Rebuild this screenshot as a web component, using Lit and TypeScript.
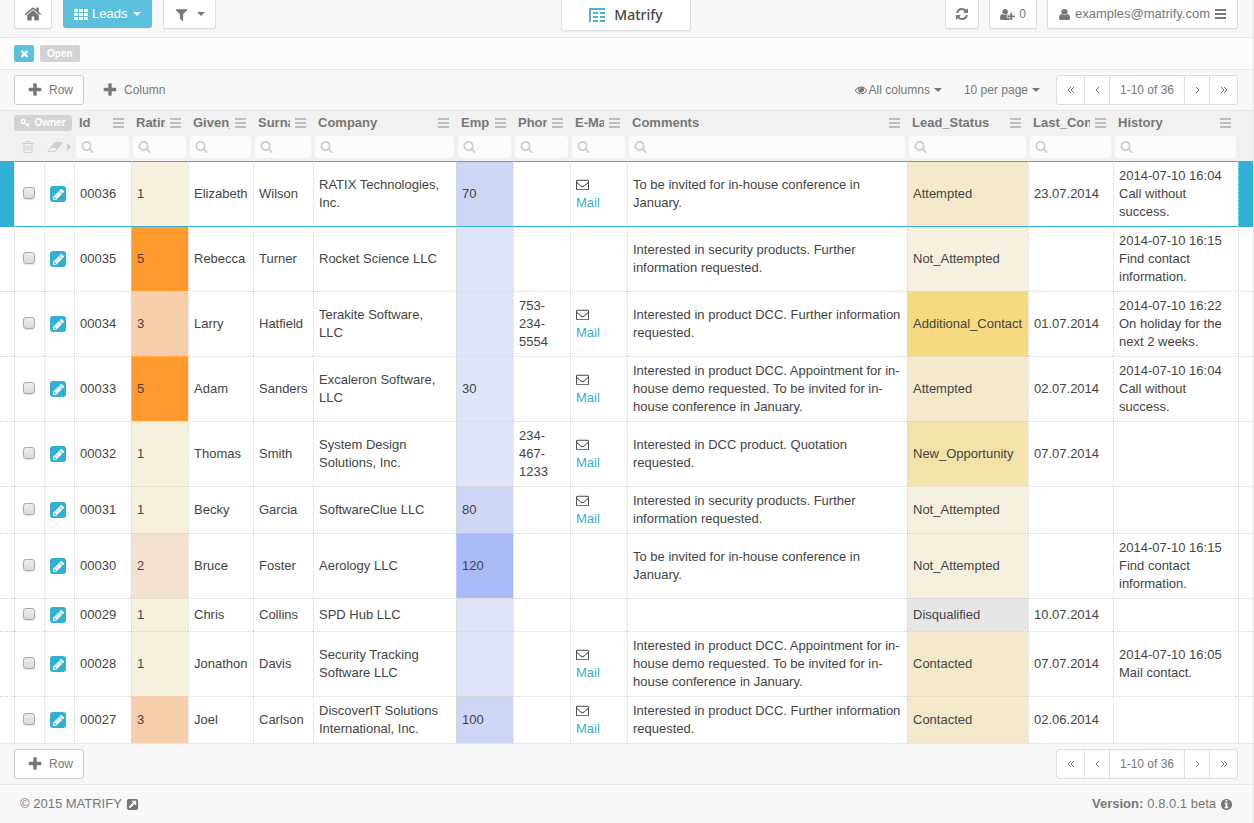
import { LitElement, html, css, svg, nothing } from "lit";
import { customElement } from "lit/decorators.js";
import { classMap } from "lit/directives/class-map.js";

interface Icon {
  box: string;
  w: number;
  h: number;
  d: string;
}

const em = "0 0 1792 1792";

const icons: Record<string, Icon> = {
  home: { box: em, w: 18, h: 18, d: "M1472 992v480q0 26-19 45t-45 19h-384v-384h-256v384h-384q-26 0-45-19t-19-45v-480q0-1 .5-3t.5-3l575-474 575 474q1 2 1 6zm223-69l-62 74q-8 9-21 11h-3q-13 0-21-7l-692-577-692 577q-12 8-24 7-13-2-21-11l-62-74q-8-10-7-23.5t11-21.5l719-599q32-26 76-26t76 26l244 204v-195q0-14 9-23t23-9h192q14 0 23 9t9 23v408l219 182q10 8 11 21.5t-7 23.5z" },
  grid: { box: "0 0 14 11", w: 14, h: 11, d: "M0 0h4v3h-4zM5 0h4v3h-4zM10 0h4v3h-4zM0 4h4v3h-4zM5 4h4v3h-4zM10 4h4v3h-4zM0 8h4v3h-4zM5 8h4v3h-4zM10 8h4v3h-4z" },
  filter: { box: em, w: 15, h: 15, d: "M1595 295q17 41-14 70l-493 493v742q0 42-39 59-13 5-25 5-27 0-45-19l-256-256q-19-19-19-45v-486l-493-493q-31-29-14-70 17-39 59-39h1280q42 0 59 39z" },
  refresh: { box: em, w: 14, h: 14, d: "M1639 1056q0 5-1 7-64 268-268 434.5t-478 166.5q-146 0-282.5-55t-243.5-157l-129 129q-19 19-45 19t-45-19-19-45v-448q0-26 19-45t45-19h448q26 0 45 19t19 45-19 45l-137 137q71 66 161 102t187 36q134 0 250-65t186-179q11-17 53-117 8-23 30-23h192q13 0 22.5 9.5t9.5 22.5zm25-800v448q0 26-19 45t-45 19h-448q-26 0-45-19t-19-45 19-45l138-138q-148-137-349-137-134 0-250 65t-186 179q-11 17-53 117-8 23-30 23h-199q-13 0-22.5-9.5t-9.5-22.5v-7q65-268 270-434.5t480-166.5q146 0 284 55.5t245 156.5l130-129q19-19 45-19t45 19 19 45z" },
  userPlus: { box: "0 0 2048 1792", w: 15, h: 13, d: "M704 896q-159 0-271.5-112.5t-112.5-271.5 112.5-271.5 271.5-112.5 271.5 112.5 112.5 271.5-112.5 271.5-271.5 112.5zm960 128h352q13 0 22.5 9.5t9.5 22.5v192q0 13-9.5 22.5t-22.5 9.5h-352v352q0 13-9.5 22.5t-22.5 9.5h-192q-13 0-22.5-9.5t-9.5-22.5v-352h-352q-13 0-22.5-9.5t-9.5-22.5v-192q0-13 9.5-22.5t22.5-9.5h352v-352q0-13 9.5-22.5t22.5-9.5h192q13 0 22.5 9.5t9.5 22.5v352zm-736 224q0 52 38 90t90 38h256v238q-68 50-171 50h-874q-121 0-194-69t-73-190q0-53 3.5-103.5t14-109 26.5-108.5 43-97.5 62-81 85.5-53.5 111.5-20q19 0 39 17 79 61 154.5 91.5t164.5 30.5 164.5-30.5 154.5-91.5q20-17 39-17 132 0 217 96h-223q-52 0-90 38t-38 90v192z" },
  user: { box: "256 128 1280 1536", w: 11, h: 11, d: "M1536 1399q0 109-62.5 187t-150.5 78h-854q-88 0-150.5-78t-62.5-187q0-85 8.5-160.5t31.5-152 58.5-131 94-89 134.5-34.5q131 128 313 128t313-128q76 0 134.5 34.5t94 89 58.5 131 31.5 152 8.5 160.5zm-256-887q0 159-112.5 271.5t-271.5 112.5-271.5-112.5-112.5-271.5 112.5-271.5 271.5-112.5 271.5 112.5 112.5 271.5z" },
  bars: { box: "0 0 11 10", w: 11, h: 10, d: "M0 0h11v2h-11zM0 4h11v2h-11zM0 8h11v2h-11z" },
  times: { box: em, w: 11, h: 11, d: "M1490 1322q0 40-28 68l-136 136q-28 28-68 28t-68-28l-294-294-294 294q-28 28-68 28t-68-28l-136-136q-28-28-28-68t28-68l294-294-294-294q-28-28-28-68t28-68l136-136q28-28 68-28t68 28l294 294 294-294q28-28 68-28t68 28l136 136q28 28 28 68t-28 68l-294 294 294 294q28 28 28 68z" },
  plus: { box: em, w: 16, h: 16, d: "M1600 736v192q0 40-28 68t-68 28h-416v416q0 40-28 68t-68 28h-192q-40 0-68-28t-28-68v-416h-416q-40 0-68-28t-28-68v-192q0-40 28-68t68-28h416v-416q0-40 28-68t68-28h192q40 0 68 28t28 68v416h416q40 0 68 28t28 68z" },
  eye: { box: em, w: 12, h: 12, d: "M1664 960q-152-236-381-353 61 104 61 225 0 185-131.5 316.5t-316.5 131.5-316.5-131.5-131.5-316.5q0-121 61-225-229 117-381 353 133 205 333.5 326.5t434.5 121.5 434.5-121.5 333.5-326.5zm-720-384q0-20-14-34t-34-14q-125 0-214.5 89.5t-89.5 214.5q0 20 14 34t34 14 34-14 14-34q0-86 61-147t147-61q20 0 34-14t14-34zm848 384q0 34-20 69-140 230-376.5 368.5t-499.5 138.5-499.5-139-376.5-368q-20-35-20-69t20-69q140-229 376.5-368t499.5-139 499.5 139 376.5 368q20 35 20 69z" },
  search: { box: em, w: 13, h: 13, d: "M1216 832q0-185-131.5-316.5t-316.5-131.5-316.5 131.5-131.5 316.5 131.5 316.5 316.5 131.5 316.5-131.5 131.5-316.5zm512 832q0 52-38 90t-90 38q-54 0-90-38l-343-342q-179 124-399 124-143 0-273.5-55.5t-225-150-150-225-55.5-273.5 55.5-273.5 150-225 225-150 273.5-55.5 273.5 55.5 225 150 150 225 55.5 273.5q0 220-124 399l343 343q37 37 37 90z" },
  trash: { box: em, w: 14, h: 14, d: "M704 736v576q0 14-9 23t-23 9h-64q-14 0-23-9t-9-23v-576q0-14 9-23t23-9h64q14 0 23 9t9 23zm256 0v576q0 14-9 23t-23 9h-64q-14 0-23-9t-9-23v-576q0-14 9-23t23-9h64q14 0 23 9t9 23zm256 0v576q0 14-9 23t-23 9h-64q-14 0-23-9t-9-23v-576q0-14 9-23t23-9h64q14 0 23 9t9 23zm128 724v-948h-896v948q0 22 7 40.5t14.5 27 10.5 8.5h832q3 0 10.5-8.5t14.5-27 7-40.5zm-672-1076h448l-48-117q-7-9-17-11h-317q-10 2-17 11zm928 32v64q0 14-9 23t-23 9h-96v948q0 83-47 143.5t-113 60.5h-832q-66 0-113-58.5t-47-141.5v-952h-96q-14 0-23-9t-9-23v-64q0-14 9-23t23-9h309l70-167q15-37 54-63t79-26h320q40 0 79 26t54 63l70 167h309q14 0 23 9t9 23z" },
  eraser: { box: "0 0 2048 1792", w: 16, h: 14, d: "M960 1408l336-384h-768l-336 384h768zm1013-1077q15 34 9.5 71.5t-30.5 65.5l-896 1024q-38 44-96 44h-768q-38 0-69.5-20.5t-47.5-54.5q-15-34-9.5-71.5t30.5-65.5l896-1024q38-44 96-44h768q38 0 69.5 20.5t47.5 54.5z" },
  envelope: { box: em, w: 13, h: 13, d: "M1664 1504v-768q-32 36-69 66-268 206-426 338-51 43-83 67t-86.5 48.5-102.5 24.5h-2q-48 0-102.5-24.5t-86.5-48.5-83-67q-158-132-426-338-37-30-69-66v768q0 13 9.5 22.5t22.5 9.5h1472q13 0 22.5-9.5t9.5-22.5zm0-1051v-24.5l-.5-13-3-12.5-5.5-9-9-7.5-14-2.5h-1472q-13 0-22.5 9.5t-9.5 22.5q0 168 147 284 193 152 401 317 6 5 35 29.5t46 37.5 44.5 31.5 50.5 27.5 43 9h2q20 0 43-9t50.5-27.5 44.5-31.5 46-37.5 35-29.5q208-165 401-317 54-43 100.5-115.5t46.5-131.5zm128-37v1088q0 66-47 113t-113 47h-1472q-66 0-113-47t-47-113v-1088q0-66 47-113t113-47h1472q66 0 113 47t47 113z" },
  pencil: { box: em, w: 13, h: 13, d: "M491 1536l91-91-235-235-91 91v107h128v128h107zm523-928q0-22-22-22-10 0-17 7l-542 542q-7 7-7 17 0 22 22 22 10 0 17-7l542-542q7-7 7-17zm-54-192l416 416-832 832h-416v-416zm683 96q0 53-37 90l-166 166-416-416 166-165q36-38 90-38 53 0 91 38l235 234q37 39 37 91z" },
  info: { box: em, w: 13, h: 13, d: "M1152 1376v-160q0-14-9-23t-23-9h-96v-512q0-14-9-23t-23-9h-320q-14 0-23 9t-9 23v160q0 14 9 23t23 9h96v320h-96q-14 0-23 9t-9 23v160q0 14 9 23t23 9h448q14 0 23-9t9-23zm-128-896v-160q0-14-9-23t-23-9h-192q-14 0-23 9t-9 23v160q0 14 9 23t23 9h192q14 0 23-9t9-23zm640 416q0 209-103 385.5t-279.5 279.5-385.5 103-385.5-103-279.5-279.5-103-385.5 103-385.5 279.5-279.5 385.5-103 385.5 103 279.5 279.5 103 385.5z" },
  external: { box: em, w: 13, h: 13, d: "M1408 928v-480q0-26-19-45t-45-19h-480q-42 0-59 39-17 41 14 70l144 144-534 534q-19 19-19 45t19 45l102 102q19 19 45 19t45-19l534-534 144 144q18 19 45 19 12 0 25-5 39-17 39-59zm256-512v960q0 119-84.5 203.5t-203.5 84.5h-960q-119 0-203.5-84.5t-84.5-203.5v-960q0-119 84.5-203.5t203.5-84.5h960q119 0 203.5 84.5t84.5 203.5z" },
};

const icon = (name: string) => {
  const i = icons[name];
  return html`<svg class="icon" aria-hidden="true" width=${i.w} height=${i.h} viewBox=${i.box} preserveAspectRatio="none">${svg`<path d=${i.d} />`}</svg>`;
};

const line = (d: string, w: number, h: number, stroke: number) =>
  html`<svg class="line" aria-hidden="true" width=${w} height=${h} viewBox="0 0 ${w} ${h}" stroke-width=${stroke}>${svg`<path d=${d} />`}</svg>`;

interface Column {
  name: string;
  size: string;
}

const columns: Column[] = [
  { name: "Id", size: "short" },
  { name: "Rating", size: "short" },
  { name: "Given_Name", size: "given" },
  { name: "Surname", size: "surname" },
  { name: "Company", size: "company" },
  { name: "Emp", size: "short" },
  { name: "Phone", size: "short" },
  { name: "E-Mail", size: "short" },
  { name: "Comments", size: "wide" },
  { name: "Lead_Status", size: "status" },
  { name: "Last_Contact", size: "date" },
  { name: "History", size: "history" },
];

interface Lead {
  id: string;
  rating: number;
  given: string;
  surname: string;
  company: string;
  emp?: number;
  phone?: string;
  mail?: boolean;
  comments?: string;
  status: string;
  last?: string;
  history?: string;
}

const leads: Lead[] = [
  { id: "00036", rating: 1, given: "Elizabeth", surname: "Wilson", company: "RATIX Technologies, Inc.", emp: 70, mail: true, comments: "To be invited for in-house conference in January.", status: "Attempted", last: "23.07.2014", history: "2014-07-10 16:04 Call without success." },
  { id: "00035", rating: 5, given: "Rebecca", surname: "Turner", company: "Rocket Science LLC", comments: "Interested in security products. Further information requested.", status: "Not_Attempted", history: "2014-07-10 16:15 Find contact information." },
  { id: "00034", rating: 3, given: "Larry", surname: "Hatfield", company: "Terakite Software, LLC", phone: "753-234-5554", mail: true, comments: "Interested in product DCC. Further information requested.", status: "Additional_Contact", last: "01.07.2014", history: "2014-07-10 16:22 On holiday for the next 2 weeks." },
  { id: "00033", rating: 5, given: "Adam", surname: "Sanders", company: "Excaleron Software, LLC", emp: 30, mail: true, comments: "Interested in product DCC. Appointment for in-house demo requested. To be invited for in-house conference in January.", status: "Attempted", last: "02.07.2014", history: "2014-07-10 16:04 Call without success." },
  { id: "00032", rating: 1, given: "Thomas", surname: "Smith", company: "System Design Solutions, Inc.", phone: "234-467-1233", mail: true, comments: "Interested in DCC product. Quotation requested.", status: "New_Opportunity", last: "07.07.2014" },
  { id: "00031", rating: 1, given: "Becky", surname: "Garcia", company: "SoftwareClue LLC", emp: 80, mail: true, comments: "Interested in security products. Further information requested.", status: "Not_Attempted" },
  { id: "00030", rating: 2, given: "Bruce", surname: "Foster", company: "Aerology LLC", emp: 120, comments: "To be invited for in-house conference in January.", status: "Not_Attempted", history: "2014-07-10 16:15 Find contact information." },
  { id: "00029", rating: 1, given: "Chris", surname: "Collins", company: "SPD Hub LLC", status: "Disqualified", last: "10.07.2014" },
  { id: "00028", rating: 1, given: "Jonathon", surname: "Davis", company: "Security Tracking Software LLC", mail: true, comments: "Interested in product DCC. Appointment for in-house demo requested. To be invited for in-house conference in January.", status: "Contacted", last: "07.07.2014", history: "2014-07-10 16:05 Mail contact." },
  { id: "00027", rating: 3, given: "Joel", surname: "Carlson", company: "DiscoverIT Solutions International, Inc.", emp: 100, mail: true, comments: "Interested in product DCC. Further information requested.", status: "Contacted", last: "02.06.2014" },
];

const base = css`
  * {
    box-sizing: border-box;
  }
  button,
  input {
    font: inherit;
    color: inherit;
    margin: 0;
    padding: 0;
    border: 0;
    background: none;
  }
  button {
    display: flex;
    align-items: center;
    cursor: pointer;
    white-space: nowrap;
  }
  a {
    color: inherit;
    text-decoration: none;
  }
  .icon {
    display: block;
    flex: none;
    fill: currentColor;
  }
  .line {
    display: block;
    flex: none;
    fill: none;
    stroke: currentColor;
  }
  .caret {
    flex: none;
    margin-left: 2px;
    border: 4px solid transparent;
    border-top-color: currentColor;
    border-bottom: 0;
  }
`;

@customElement("lead-pager")
class LeadPager extends LitElement {
  static styles = [
    base,
    css`
      :host {
        display: block;
        font-size: 12px;
      }
      .pager {
        display: flex;
        height: 30px;
        border: 1px solid #ddd;
        border-radius: 3px;
        background: #fff;
      }
      .step,
      .range {
        display: flex;
        align-items: center;
        justify-content: center;
        width: 25px;
      }
      .first {
        width: 27px;
      }
      .last {
        width: 28px;
      }
      .range {
        width: 75px;
      }
      .pager > * + * {
        border-left: 1px solid #ddd;
      }
    `,
  ];

  render() {
    return html`
      <div class="pager">
        <button class="step first" aria-label="First page">${line("M4 1L1 4L4 7M7 1L4 4L7 7", 8, 8, 1)}</button>
        <button class="step" aria-label="Previous page">${line("M4 1L1 4L4 7", 5, 8, 1)}</button>
        <span class="range">1-10 of 36</span>
        <button class="step" aria-label="Next page">${line("M1 1L4 4L1 7", 5, 8, 1)}</button>
        <button class="step last" aria-label="Last page">${line("M1 1L4 4L1 7M4 1L7 4L4 7", 8, 8, 1)}</button>
      </div>
    `;
  }
}

@customElement("lead-table")
class LeadTable extends LitElement {
  static styles = [
    base,
    css`
      :host {
        display: block;
        background: #fff;
      }
      table {
        width: 100%;
        table-layout: fixed;
        border-collapse: separate;
        border-spacing: 0;
      }
      .edge { width: 14px; }
      .tool { width: 30px; }
      .short { width: 57px; }
      .given { width: 65px; }
      .surname { width: 60px; }
      .company { width: 143px; }
      .wide { width: auto; }
      .status { width: 121px; }
      .date { width: 85px; }
      .history { width: 125px; }
      .tail { width: 15px; }

      th {
        padding: 3px 2px;
        border-top: 1px solid #e5e5e5;
        background: #f1f1f1;
        color: #777;
        font-weight: bold;
        text-align: left;
        vertical-align: top;
      }
      .owner-head {
        padding-left: 0;
      }
      .head {
        display: flex;
        align-items: center;
        gap: 5px;
        height: 18px;
        margin-bottom: 4px;
        padding: 0 5px 0 3px;
      }
      .name {
        flex: 1;
        min-width: 0;
        overflow: hidden;
        white-space: nowrap;
      }
      .menu {
        color: #bdbdbd;
      }
      .search {
        display: flex;
        align-items: center;
        gap: 4px;
        height: 22px;
        padding: 0 5px 2px;
        border-radius: 4px;
        background: #fcfcfc;
        color: #d0d0d0;
      }
      .search input {
        flex: 1;
        width: 0;
        min-width: 0;
        color: #555;
        font-weight: normal;
        outline: none;
      }
      .owner {
        justify-content: center;
        gap: 4px;
        width: 100%;
        height: 16px;
        margin: 1px 0 5px;
        border-radius: 3px;
        background: #d3d3d3;
        color: #fff;
        font-size: 10px;
        font-weight: bold;
      }
      .tools {
        display: flex;
        align-items: center;
        justify-content: space-between;
        height: 22px;
        padding: 0 1px 0 7px;
        color: #d0d0d0;
      }
      .erase {
        gap: 4px;
      }
      .right {
        border: 4px solid transparent;
        border-left-color: currentColor;
        border-right: 0;
      }

      tr {
        height: 33px;
      }
      td {
        padding: 5px;
        border-top: 1px dotted #d4d4d4;
        border-left: 1px dotted #d4d4d4;
        color: #444;
        line-height: 18px;
        vertical-align: middle;
      }
      td:first-child {
        border-left: 0;
      }
      td.thin {
        padding: 0;
      }
      td.firm {
        padding-right: 15px;
      }
      .current td,
      .current + tr td {
        border-top: 1px solid #31b0d5;
      }
      .current .thin.bar {
        background: #31b0d5;
      }
      .check {
        appearance: none;
        display: block;
        width: 12px;
        height: 12px;
        margin: 0 0 2px 8px;
        border: 1px solid #a9a9a9;
        border-radius: 3px;
        background: linear-gradient(#ededed, #dadada);
        box-shadow: 0 1px 1px rgba(0, 0, 0, 0.12);
      }
      .edit {
        justify-content: center;
        width: 16px;
        height: 16px;
        margin-left: 5px;
        border-radius: 3px;
        background: #31b0d5;
        color: #fff;
      }
      .mail-line {
        display: flex;
        align-items: center;
        height: 18px;
        padding-bottom: 2px;
      }
      .mail {
        color: #31b0d5;
      }
      .r1 { background: #f6f0de; }
      .r2 { background: #f4e1cf; }
      .r3 { background: #f6ceaa; }
      .r5 { background: #ff9a2e; }
      .e0 { background: #dfe4f8; }
      .e1 { background: #cdd6f6; }
      .e2 { background: #a8bbf6; }
      .Attempted,
      .Contacted { background: #f4eacb; }
      .Not_Attempted { background: #f6f0de; }
      .Additional_Contact { background: #f5da81; }
      .New_Opportunity { background: #f3e2a9; }
      .Disqualified { background: #e6e6e6; }
    `,
  ];

  private row(l: Lead, index: number) {
    const e = l.emp ?? 0;
    return html`
      <tr class=${classMap({ current: index === 0 })}>
        <td class="thin bar"></td>
        <td class="thin"><input class="check" type="checkbox" aria-label="Select ${l.id}" /></td>
        <td class="thin"><button class="edit" aria-label="Edit ${l.id}">${icon("pencil")}</button></td>
        <td>${l.id}</td>
        <td class="r${l.rating}">${l.rating}</td>
        <td>${l.given}</td>
        <td>${l.surname}</td>
        <td class="firm">${l.company}</td>
        <td class=${e > 100 ? "e2" : e > 50 ? "e1" : "e0"}>${l.emp ?? nothing}</td>
        <td>${l.phone ?? nothing}</td>
        <td>${l.mail ? html`<div class="mail-line">${icon("envelope")}</div><a class="mail" href="#">Mail</a>` : nothing}</td>
        <td>${l.comments ?? nothing}</td>
        <td class=${l.status}>${l.status}</td>
        <td>${l.last ?? nothing}</td>
        <td>${l.history ?? nothing}</td>
        <td class="thin bar"></td>
      </tr>
    `;
  }

  render() {
    return html`
      <table>
        <colgroup>
          <col class="edge" /><col class="tool" /><col class="tool" />
          ${columns.map((c) => html`<col class=${c.size} />`)}
          <col class="tail" />
        </colgroup>
        <thead>
          <tr>
            <th></th>
            <th class="owner-head" colspan="2">
              <button class="owner">${line("M5 5L9 9M7 7L9 6M5 3.5A1.8 2 0 1 1 1.4 3.5A1.8 2 0 1 1 5 3.5", 10, 10, 1.5)}Owner</button>
              <div class="tools">
                <button aria-label="Delete selected">${icon("trash")}</button>
                <button class="erase" aria-label="Clear filters">${icon("eraser")}<span class="right"></span></button>
              </div>
            </th>
            ${columns.map(
              (c) => html`
                <th>
                  <div class="head">
                    <span class="name">${c.name}</span>
                    <button class="menu" aria-label="${c.name} menu">${icon("bars")}</button>
                  </div>
                  <label class="search">${icon("search")}<input type="text" aria-label="Search ${c.name}" /></label>
                </th>
              `,
            )}
            <th></th>
          </tr>
        </thead>
        <tbody>
          ${leads.map((l, i) => this.row(l, i))}
        </tbody>
      </table>
    `;
  }
}

@customElement("app-root")
class AppRoot extends LitElement {
  static styles = [
    base,
    css`
      :host {
        display: block;
        box-sizing: border-box;
        min-height: 100vh;
        border-right: 1px solid #e5e5e5;
        background: #f8f8f8;
        color: #777;
        font: 13px/18px "Liberation Sans", Arial, sans-serif;
      }
      .top {
        display: grid;
        grid-template-columns: 1fr auto 1fr;
        align-items: start;
        height: 38px;
        padding: 0 15px 0 14px;
        border-bottom: 1px solid #e5e5e5;
      }
      .group {
        display: flex;
        align-items: flex-start;
        gap: 11px;
      }
      .account {
        justify-content: flex-end;
        gap: 10px;
      }
      .tab {
        height: 29px;
        padding: 0 9px;
        border: 1px solid #ddd;
        border-top: 0;
        border-radius: 0 0 3px 3px;
        background: #fff;
        box-shadow: 0 1px 1px rgba(0, 0, 0, 0.05);
      }
      .leads {
        gap: 4px;
        height: 28px;
        padding: 0 11px;
        border: 0;
        background: #5bc0de;
        color: #fff;
      }
      .filter {
        gap: 6px;
        padding: 0 10px;
      }
      .count {
        gap: 4px;
        padding: 0 10px;
        font-size: 12px;
      }
      .who {
        gap: 5px;
        padding: 0 11px;
      }
      .brand {
        display: flex;
        align-items: center;
        justify-content: center;
        gap: 9px;
        width: 130px;
        height: 31px;
        color: #444;
        font: 500 14px/20px "Noto Sans", "Open Sans", sans-serif;
      }
      .filters {
        display: flex;
        align-items: center;
        gap: 6px;
        height: 32px;
        padding: 0 14px;
        border-bottom: 1px solid #e5e5e5;
        background: #fcfcfc;
      }
      .chip {
        justify-content: center;
        height: 17px;
        padding: 0 7px;
        border-radius: 2px;
        background: #d3d3d3;
        color: #fff;
        font-size: 10px;
        font-weight: bold;
      }
      .clear {
        width: 20px;
        padding: 0;
        background: #5bc0de;
      }
      .bar {
        display: flex;
        align-items: center;
        height: 40px;
        padding: 0 15px 0 14px;
        font-size: 12px;
      }
      .bottom {
        height: 41px;
        border-top: 1px solid #e5e5e5;
      }
      .add {
        gap: 6px;
        height: 30px;
        padding: 0 10px 0 12px;
        border: 1px solid transparent;
        border-radius: 3px;
      }
      .framed {
        margin-right: 5px;
        border-color: #ccc;
        background: #fff;
      }
      .spacer {
        flex: 1;
      }
      .drop {
        gap: 2px;
        margin-right: 22px;
      }
      .per {
        margin-right: 16px;
      }
      footer {
        display: flex;
        align-items: center;
        justify-content: space-between;
        height: 39px;
        padding: 0 20px;
        border-top: 1px solid #e5e5e5;
      }
      .note {
        display: flex;
        align-items: center;
        gap: 4px;
      }
    `,
  ];

  private addRow() {
    return html`<button class="add framed">${icon("plus")}Row</button>`;
  }

  render() {
    return html`
      <header class="top">
        <div class="group">
          <button class="tab" aria-label="Home">${icon("home")}</button>
          <button class="tab leads">${icon("grid")}Leads<span class="caret"></span></button>
          <button class="tab filter" aria-label="Filter">${icon("filter")}<span class="caret"></span></button>
        </div>
        <a class="tab brand" href="#">
          <svg width="16" height="14" viewBox="0 0 16 14" fill="#4db3d2" aria-hidden="true">
            <path d="M0 0h16v2h-14v12h-2zM4 4h5v2h-5zM11 4h5v2h-5zM4 8h5v2h-5zM11 8h5v2h-5zM4 12h5v2h-5zM11 12h5v2h-5z" />
          </svg>
          Matrify
        </a>
        <div class="group account">
          <button class="tab" aria-label="Refresh">${icon("refresh")}</button>
          <button class="tab count">${icon("userPlus")}0</button>
          <button class="tab who">${icon("user")}examples@matrify.com${icon("bars")}</button>
        </div>
      </header>
      <div class="filters">
        <button class="chip clear" aria-label="Clear filter">${icon("times")}</button>
        <button class="chip">Open</button>
      </div>
      <div class="bar">
        ${this.addRow()}
        <button class="add">${icon("plus")}Column</button>
        <span class="spacer"></span>
        <button class="drop">${icon("eye")}All columns<span class="caret"></span></button>
        <button class="drop per">10 per page<span class="caret"></span></button>
        <lead-pager></lead-pager>
      </div>
      <lead-table></lead-table>
      <div class="bar bottom">
        ${this.addRow()}
        <span class="spacer"></span>
        <lead-pager></lead-pager>
      </div>
      <footer>
        <a class="note" href="#">© 2015 MATRIFY ${icon("external")}</a>
        <span class="note"><b>Version:</b> 0.8.0.1 beta ${icon("info")}</span>
      </footer>
    `;
  }
}
